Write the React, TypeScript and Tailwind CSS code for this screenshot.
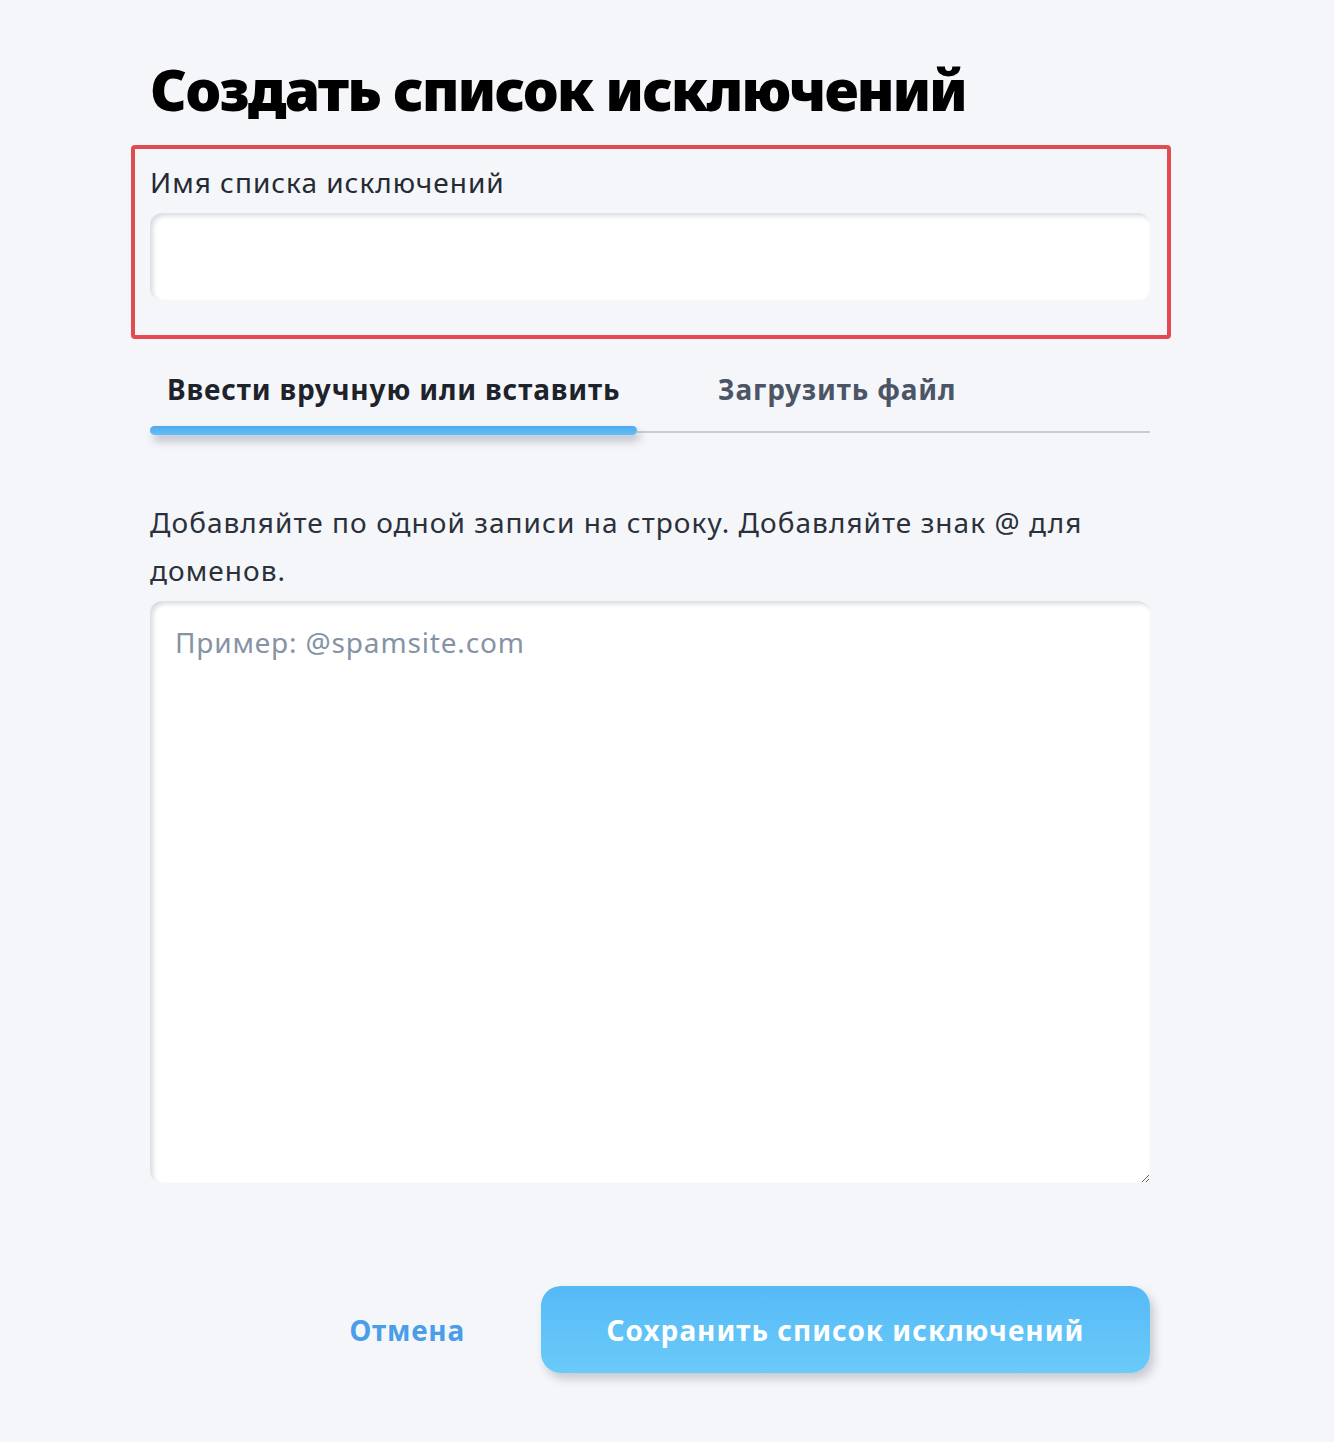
import React from 'react';

export default function App() {
  return (
    <div className="min-h-screen bg-[#f5f6fa] font-['Noto_Sans','Lato',sans-serif] text-[#1f2530]">
      <div className="ml-[150px] w-[1000px] pt-[50px]">
        <h1 className="text-[57px] leading-[78px] font-black tracking-[-1.8px] text-black">
          Создать список исключений
        </h1>

        <div className="relative mt-[38px]">
          <div className="pointer-events-none absolute -left-[19px] -right-[21px] -top-[21px] -bottom-[39px] rounded-[4px] border-[4px] border-[#e24b50]" />
          <label className="block text-[28px] leading-[32px] tracking-[1px] text-[#262b33]">
            Имя списка исключений
          </label>
          <input
            type="text"
            className="mt-[15px] block h-[87px] w-full rounded-[12px] bg-white px-6 text-[28px] outline-none shadow-[inset_3px_3px_4px_rgba(120,130,150,0.28)]"
          />
        </div>

        <div className="mt-[73px] flex items-end">
          <div className="relative w-[487px] pb-[27px] pl-[17px]">
            <span className="text-[28px] font-bold leading-[32px] tracking-[0.85px] text-[#1e232b]">
              Ввести вручную или вставить
            </span>
            <div className="absolute bottom-[-2px] left-0 right-0 h-[9px] rounded-full bg-gradient-to-b from-[#4fa8ee] to-[#64bef6] shadow-[3px_6px_8px_rgba(80,90,110,0.35)]" />
          </div>
          <div className="flex-1 border-b-2 border-[#c8ccd4] pb-[25px] pl-[81px]">
            <span className="text-[28px] font-bold leading-[32px] tracking-[0.85px] text-[#4b5566]">
              Загрузить файл
            </span>
          </div>
        </div>

        <p className="mt-[65px] text-[28px] leading-[48px] tracking-[1.05px] text-[#2b313b]">
          Добавляйте по одной записи на строку. Добавляйте знак @ для доменов.
        </p>

        <textarea
          placeholder="Пример: @spamsite.com"
          className="mt-[7px] block h-[582px] w-full rounded-[12px] bg-white px-[25px] py-[21px] text-[28px] leading-[40px] tracking-[0.85px] text-[#2b313b] outline-none placeholder:text-[#8593a4] shadow-[inset_3px_3px_4px_rgba(120,130,150,0.28)]"
        />

        <div className="mt-[103px] flex items-center justify-end gap-[76px]">
          <button className="text-[28px] font-bold tracking-[0.8px] text-[#4a9ee8]">Отмена</button>
          <button className="h-[87px] w-[609px] rounded-[20px] bg-gradient-to-b from-[#55b9f6] to-[#6acbf9] text-[28px] font-bold tracking-[1px] text-white shadow-[4px_6px_10px_rgba(90,100,120,0.3)]">
            Сохранить список исключений
          </button>
        </div>
      </div>
    </div>
  );
}
